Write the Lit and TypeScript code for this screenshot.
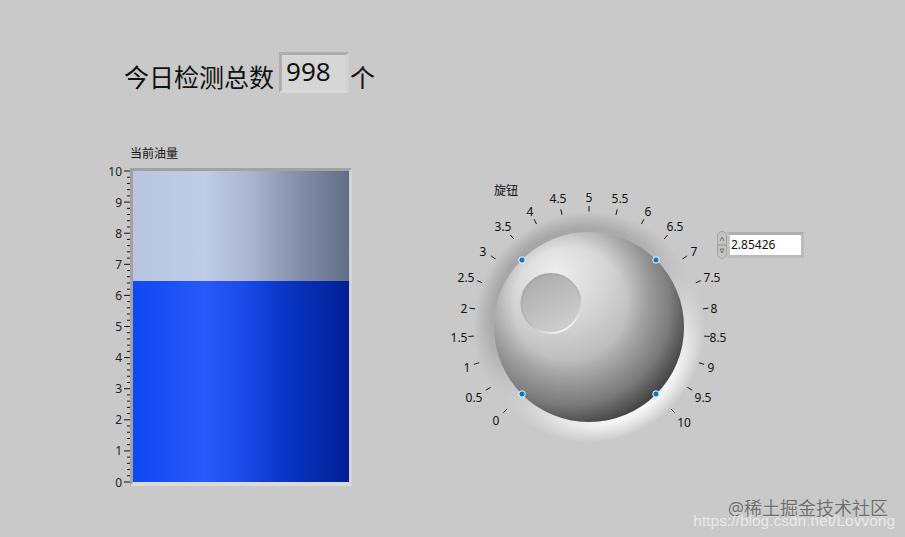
import { LitElement, html, css, svg } from "lit";
import { customElement } from "lit/decorators.js";

// Dial canvas origin is page (440,180); knob centre is page (589,327).
const CX = 149;
const CY = 147;
const LABELS: [string, number, number][] = [
  ["0", 496, 420], ["0.5", 474, 397], ["1", 467, 367], ["1.5", 459, 337], ["2", 464, 308],
  ["2.5", 466, 277], ["3", 483, 251], ["3.5", 503, 226], ["4", 530, 211], ["4.5", 558, 198],
  ["5", 589, 197], ["5.5", 620, 198], ["6", 648, 211], ["6.5", 675, 226], ["7", 694, 251],
  ["7.5", 712, 277], ["8", 714, 308], ["8.5", 718, 337], ["9", 711, 367], ["9.5", 703, 397],
  ["10", 684, 422],
];

@customElement("app-root")
export class AppRoot extends LitElement {
  static styles = css`
    :host {
      display: block;
      width: 905px;
      height: 537px;
      background: #c9c9c9;
      font-family: "Noto Sans", "Noto Sans CJK SC", sans-serif;
      color: #111;
    }
    .page {
      position: relative;
      box-sizing: border-box;
      width: 905px;
      height: 537px;
      padding-top: 52px;
      overflow: hidden;
    }
    .head {
      display: flex;
      align-items: flex-start;
      height: 41px;
      padding-left: 124px;
      font-size: 25px;
      line-height: 41px;
    }
    .lead {
      padding-top: 5px;
    }
    .count {
      box-sizing: border-box;
      width: 70px;
      height: 41px;
      margin: 0 1px 0 5px;
      padding-left: 4px;
      border: 3px solid;
      border-color: #adadad #d0d0d0 #d8d8d8 #adadad;
      background: #d6d6d6;
      font-size: 26px;
      line-height: 33px;
    }
    .lower {
      display: flex;
      align-items: flex-start;
      margin-top: 53px;
    }
    .tank-wrap {
      display: flex;
      flex-direction: column;
      flex: none;
      width: 352px;
    }
    .tank-title {
      height: 22px;
      padding-left: 130px;
      font-size: 12px;
      line-height: 16px;
    }
    .tank-row {
      display: flex;
      align-items: flex-start;
      padding-left: 100px;
    }
    .scale {
      display: block;
      flex: none;
      width: 30px;
      height: 340px;
      margin-top: -8px;
    }
    .tank {
      box-sizing: border-box;
      display: flex;
      flex: none;
      flex-direction: column;
      width: 222px;
      height: 318px;
      border-style: solid;
      border-width: 3px 3px 4px 3px;
      border-color: #a2a2a2 #d4d4d4 #dadada #a2a2a2;
    }
    .air {
      height: 110px;
      background: linear-gradient(90deg, #b8c6e2 0%, #c0cde8 33%, #a9b5d0 55%, #8a96b2 72%, #626d88 100%);
    }
    .oil {
      flex: 1;
      background: linear-gradient(90deg, #0f48f2 0%, #2a58fa 33%, #1c4cea 50%, #0a36c6 70%, #021f92 100%);
    }
    .dial {
      position: relative;
      flex: none;
      width: 400px;
      height: 300px;
      margin: 34px 0 0 88px;
    }
    .face {
      display: block;
      width: 400px;
      height: 300px;
    }
    .face text {
      font-size: 12px;
      fill: #111;
      text-anchor: middle;
    }
    .numeric {
      position: absolute;
      left: 277px;
      top: 51px;
      display: flex;
      align-items: center;
    }
    .spin {
      display: block;
      flex: none;
      width: 10px;
      height: 28px;
    }
    .field {
      box-sizing: border-box;
      width: 77px;
      height: 26px;
      border: 3px solid;
      border-color: #aeaeae #bcbcbc #bcbcbc #c4c4c4;
      background: #fff;
      padding-left: 1px;
      font-size: 12px;
      line-height: 20px;
    }
    .mark-a {
      position: absolute;
      right: 17px;
      top: 497px;
      font-size: 18px;
      line-height: 22px;
      white-space: nowrap;
      color: rgba(70, 70, 70, 0.72);
      text-shadow: 0 1px 1px rgba(255, 255, 255, 0.35);
    }
    .mark-b {
      position: absolute;
      right: 10px;
      top: 511px;
      font-family: "Liberation Sans", sans-serif;
      font-size: 15.5px;
      line-height: 20px;
      white-space: nowrap;
      color: rgba(255, 255, 255, 0.62);
    }
  `;

  private ticks() {
    const out = [];
    for (let i = 0; i <= 20; i++) {
      const a = ((225 - i * 13.5) * Math.PI) / 180;
      const c = Math.cos(a);
      const s = Math.sin(a);
      out.push(svg`<line x1=${CX + 115 * c} y1=${CY - 115 * s} x2=${CX + 121 * c} y2=${CY - 121 * s}
        stroke="#111" stroke-width="1"></line>`);
    }
    return out;
  }

  private scale() {
    const out = [];
    // Scale svg origin is page (100,160); value 10 at y=171, value 0 at y=482.
    for (let i = 0; i <= 50; i++) {
      const y = 11 + (i * 311) / 50;
      const major = i % 5 === 0;
      out.push(svg`<line x1=${major ? 24 : 27} y1=${y} x2="30" y2=${y} stroke="#111" stroke-width="1"></line>`);
      if (major) {
        out.push(svg`<text x="22" y=${y + 4.5} text-anchor="end" font-size="12" fill="#222">${10 - i / 5}</text>`);
      }
    }
    return out;
  }

  render() {
    const dots: [number, number][] = [[-67, -67], [67, -67], [-67, 67], [67, 67]];
    return html`
      <div class="page">
        <div class="head">
          <span class="lead">今日检测总数</span>
          <div class="count">998</div>
          <span class="lead">个</span>
        </div>
        <div class="lower">
          <div class="tank-wrap">
            <div class="tank-title">当前油量</div>
            <div class="tank-row">
              <svg class="scale" viewBox="0 0 30 340">${this.scale()}</svg>
              <div class="tank">
                <div class="air"></div>
                <div class="oil"></div>
              </div>
            </div>
          </div>
          <div class="dial">
            <svg class="face" viewBox="0 0 400 300">
              <defs>
                <linearGradient id="bez" x1="0.2" y1="0.05" x2="0.8" y2="0.95">
                  <stop offset="0" stop-color="#a0a0a0"></stop>
                  <stop offset="0.35" stop-color="#b0b0b0"></stop>
                  <stop offset="0.6" stop-color="#cfcfcf"></stop>
                  <stop offset="0.85" stop-color="#f2f2f2"></stop>
                  <stop offset="1" stop-color="#ffffff"></stop>
                </linearGradient>
                <radialGradient id="fade" cx="0.5" cy="0.5" r="0.5">
                  <stop offset="0.85" stop-color="#c9c9c9" stop-opacity="0"></stop>
                  <stop offset="1" stop-color="#c9c9c9" stop-opacity="1"></stop>
                </radialGradient>
                <radialGradient id="ball" cx="0.33" cy="0.22" r="1">
                  <stop offset="0" stop-color="#eeeeee"></stop>
                  <stop offset="0.25" stop-color="#d6d6d6"></stop>
                  <stop offset="0.5" stop-color="#b8b8b8"></stop>
                  <stop offset="1" stop-color="#a0a0a0"></stop>
                </radialGradient>
                <radialGradient id="shade" cx="0.4" cy="0.38" r="0.66">
                  <stop offset="0.45" stop-color="#000" stop-opacity="0"></stop>
                  <stop offset="0.8" stop-color="#000" stop-opacity="0.3"></stop>
                  <stop offset="1" stop-color="#000" stop-opacity="0.62"></stop>
                </radialGradient>
                <linearGradient id="dimple" x1="0.25" y1="0.05" x2="0.75" y2="0.95">
                  <stop offset="0" stop-color="#aeaeae"></stop>
                  <stop offset="0.8" stop-color="#c8c8c8"></stop>
                  <stop offset="1" stop-color="#d0d0d0"></stop>
                </linearGradient>
                <linearGradient id="dimple-rim" x1="0.25" y1="0.05" x2="0.75" y2="0.95">
                  <stop offset="0" stop-color="#a4a4a4"></stop>
                  <stop offset="0.65" stop-color="#bcbcbc"></stop>
                  <stop offset="1" stop-color="#f4f4f4"></stop>
                </linearGradient>
                <filter id="soft" x="-10%" y="-10%" width="120%" height="120%">
                  <feGaussianBlur stdDeviation="0.6"></feGaussianBlur>
                </filter>
              </defs>
              <text x="66" y="15">旋钮</text>
              ${this.ticks()}
              <circle cx=${CX} cy=${CY} r="115" fill="url(#bez)"></circle>
              <circle cx=${CX} cy=${CY} r="115.5" fill="url(#fade)"></circle>
              <circle cx=${CX} cy=${CY} r="95" fill="url(#ball)"></circle>
              <circle cx=${CX} cy=${CY} r="95" fill="url(#shade)"></circle>
              <circle cx="111" cy="123.5" r="29.5" fill="url(#dimple)" stroke="url(#dimple-rim)" stroke-width="2" filter="url(#soft)"></circle>
              ${dots.map(
                ([x, y]) =>
                  svg`<circle cx=${CX + x} cy=${CY + y} r="3.2" fill="#0a78c2" stroke="#fff" stroke-width="1"></circle>`,
              )}
              ${LABELS.map(
                ([t, x, y]) => svg`<text x=${x - 440} y=${y - 180 + 4.5}>${t}</text>`,
              )}
            </svg>
            <div class="numeric">
              <svg class="spin" viewBox="0 0 10 28">
                <rect x="0.5" y="0.5" width="9" height="27" rx="4.5" fill="#c4c4c4" stroke="#a4a4a4"></rect>
                <line x1="1" y1="14" x2="9" y2="14" stroke="#8e8e8e"></line>
                <path d="M3 10 L5 6 L7 10" fill="none" stroke="#777"></path>
                <path d="M3 18 L5 22 L7 18 Z" fill="none" stroke="#777"></path>
              </svg>
              <div class="field">2.85426</div>
            </div>
          </div>
        </div>
        <div class="mark-a">@稀土掘金技术社区</div>
        <div class="mark-b">https://blog.csdn.net/Lovvong</div>
      </div>
    `;
  }
}
